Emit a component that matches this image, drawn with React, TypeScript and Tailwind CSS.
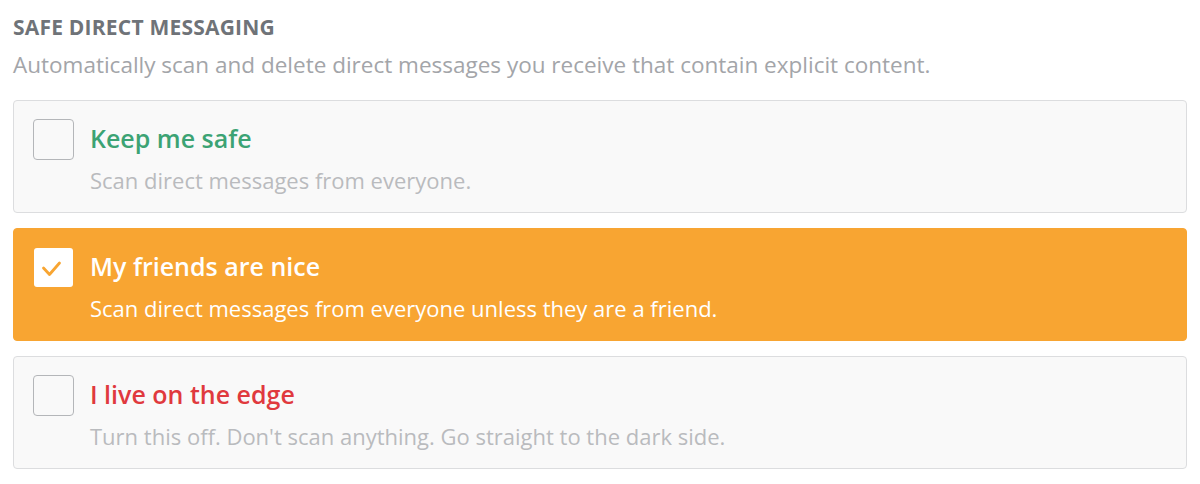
import { useState } from 'react';

const options = [
  {
    id: 'safe',
    title: 'Keep me safe',
    desc: 'Scan direct messages from everyone.',
    titleColor: 'text-[#3ca374]',
  },
  {
    id: 'friends',
    title: 'My friends are nice',
    desc: 'Scan direct messages from everyone unless they are a friend.',
    titleColor: 'text-white',
  },
  {
    id: 'edge',
    title: 'I live on the edge',
    desc: "Turn this off. Don't scan anything. Go straight to the dark side.",
    titleColor: 'text-[#e0393e]',
  },
];

function Check() {
  return (
    <svg width="39" height="39" viewBox="0 0 39 39" fill="none">
      <path d="M9.5 20l6 6.5L25.5 15" stroke="#f8a532" strokeWidth="2.8" strokeLinecap="round" strokeLinejoin="round" />
    </svg>
  );
}

export default function App() {
  const [selected, setSelected] = useState('friends');

  return (
    <div className="min-h-screen bg-white px-[13px] pt-[13px] font-['Open_Sans',sans-serif]">
      <h2 className="text-[21px] font-bold uppercase leading-[28px] tracking-[0.01em] text-[#6f7378]">
        Safe Direct Messaging
      </h2>
      <p className="mt-[10px] text-[22.5px] leading-[28px] text-[#a3a5a9]">
        Automatically scan and delete direct messages you receive that contain explicit content.
      </p>

      <div className="mt-[21px] flex flex-col gap-[15px]">
        {options.map((o) => {
          const on = selected === o.id;
          return (
            <button
              key={o.id}
              onClick={() => setSelected(o.id)}
              className={
                on
                  ? 'flex h-[113px] items-start gap-[16px] rounded-[4px] border border-[#f8a532] bg-[#f8a532] pl-[19px] pt-[18px] text-left'
                  : 'flex h-[113px] items-start gap-[16px] rounded-[4px] border border-[#dcdddf] bg-[#f9f9f9] pl-[19px] pt-[18px] text-left'
              }
            >
              <span className="flex h-[41px] w-[41px] shrink-0 items-center justify-center">
                {on ? (
                  <span className="h-[39px] w-[39px] rounded-[3px] bg-white">
                    <Check />
                  </span>
                ) : (
                  <span className="h-[41px] w-[41px] rounded-[4px] border-[1.5px] border-[#b4b6b9]" />
                )}
              </span>
              <span className="flex flex-col">
                <span className={`mt-[3px] text-[25px] font-semibold leading-[32px] ${o.titleColor}`}>{o.title}</span>
                <span className={`mt-[12px] text-[22px] leading-[28px] ${on ? 'text-white' : 'text-[#b9bbbe]'}`}>
                  {o.desc}
                </span>
              </span>
            </button>
          );
        })}
      </div>
    </div>
  );
}
